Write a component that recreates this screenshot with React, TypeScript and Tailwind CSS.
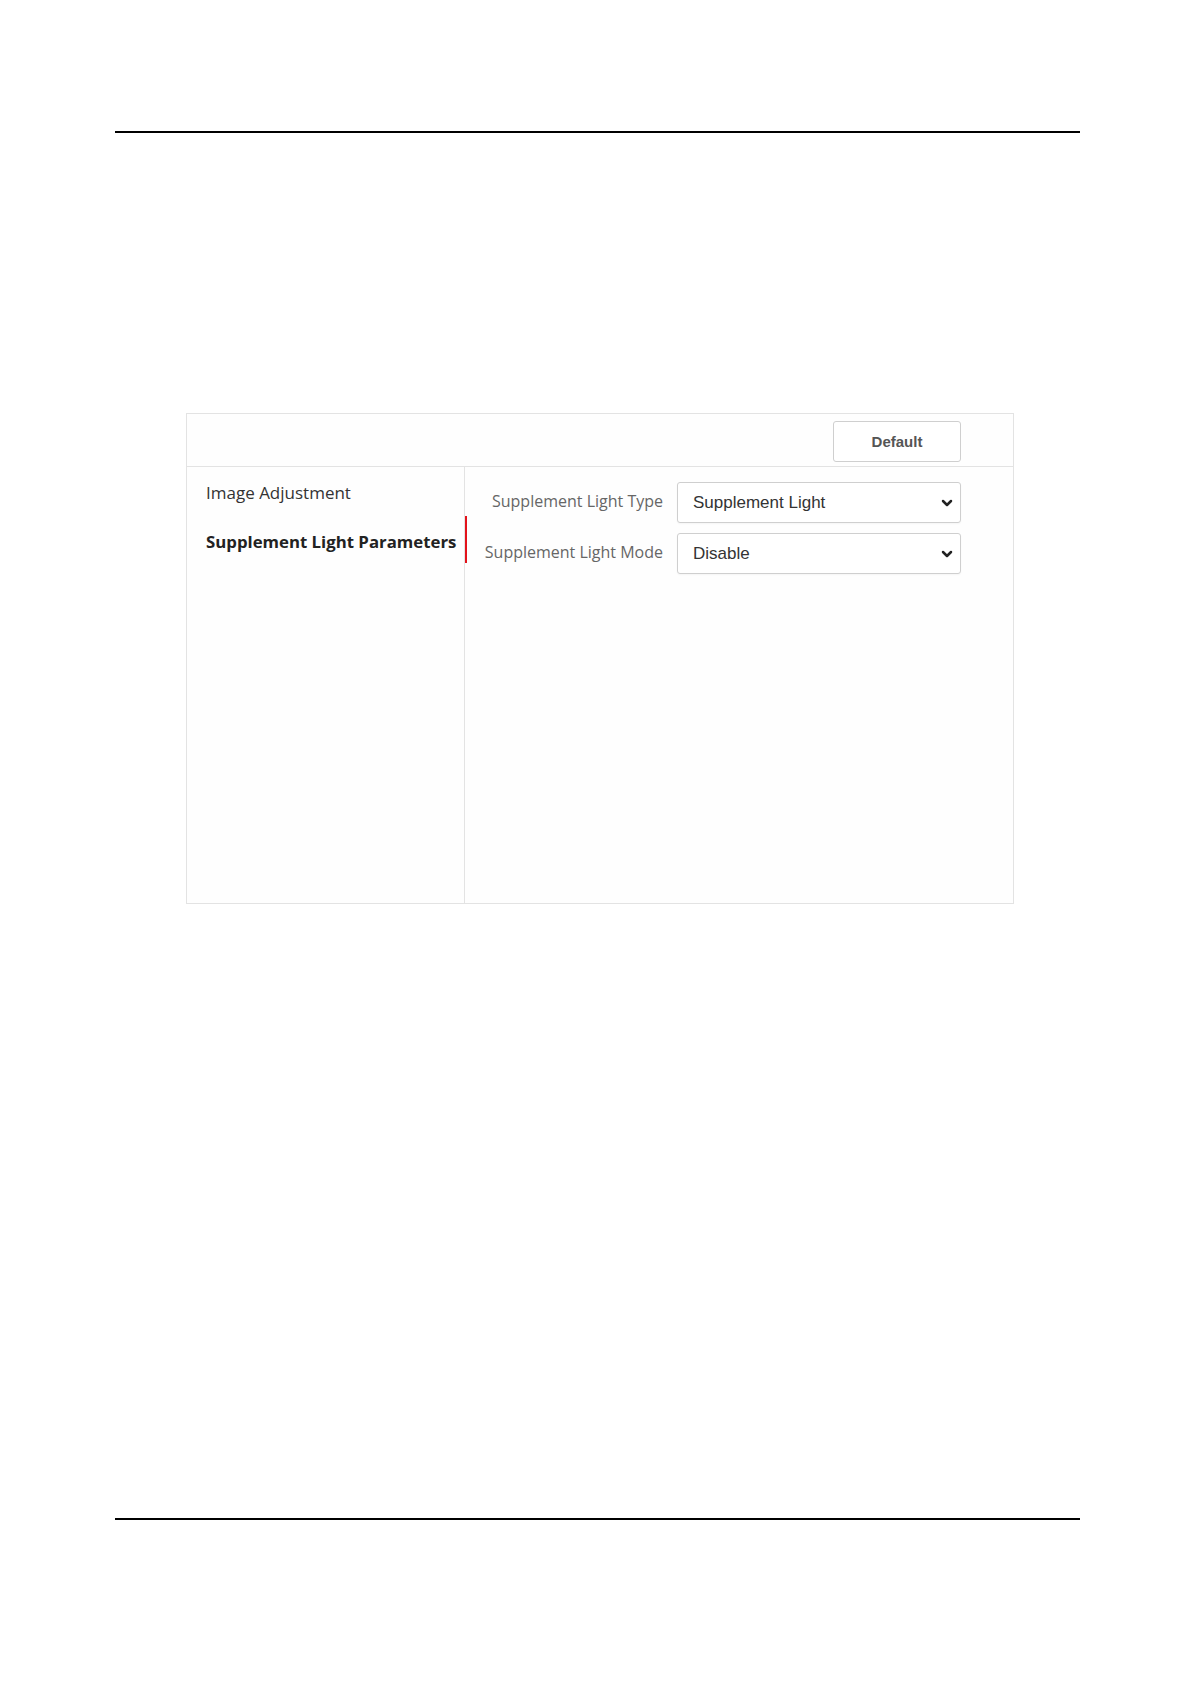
import { ChevronDown } from "lucide-react";

const ui = "font-['Open_Sans',sans-serif]";
const arial = "font-['Liberation_Sans',Arial,sans-serif]";

function Select({ value }: { value: string }) {
    return (
        <div className="flex h-[41px] w-[284px] items-center justify-between rounded-[3px] border border-[#cfcfcf] bg-white pl-[15px] pr-[5px] shadow-[0_1px_2px_rgba(0,0,0,0.04)]">
            <span className={`${arial} text-[17px] text-[#333]`}>{value}</span>
            <ChevronDown className="h-[16px] w-[16px] text-[#222]" strokeWidth={3.75} />
        </div>
    );
}

export default function App() {
    return (
        <div className="min-h-[1685px] w-[1181px] bg-white pt-[131px]">
            <div className="mx-[115px] h-[2px] w-[965px] bg-black" />

            <div className="ml-[186px] mt-[280px] flex h-[491px] w-[828px] flex-col border border-[#e3e3e3] bg-[#fefefe]">
                <div className="flex h-[53px] shrink-0 items-center justify-end border-b border-[#e3e3e3] pr-[52px] pt-[3px]">
                    <button className={`${arial} h-[41px] w-[128px] rounded-[3px] border border-[#cfcfcf] bg-white pt-[2px] text-[15px] font-bold text-[#555]`}>
                        Default
                    </button>
                </div>

                <div className="flex flex-1">
                    <div className={`${ui} w-[278px] shrink-0 border-r border-[#e3e3e3] pt-[2px]`}>
                        <div className="flex h-[47px] items-center pl-[19px] text-[17px] text-[#333]">Image Adjustment</div>
                        <div className="relative flex h-[47px] items-center pl-[19px] pt-[4px] text-[16.8px] font-bold text-[#222]">
                            Supplement Light Parameters
                            <span className="absolute -right-[3px] top-0 h-[47px] w-[2px] bg-[#e3131b]" />
                        </div>
                    </div>

                    <div className={`${ui} flex flex-col gap-[10px] pt-[15px]`}>
                        <div className="flex items-center">
                            <label className="w-[212px] pb-[3px] pr-[14px] text-right text-[16px] text-[#666]">Supplement Light Type</label>
                            <Select value="Supplement Light" />
                        </div>
                        <div className="flex items-center">
                            <label className="w-[212px] pb-[3px] pr-[14px] text-right text-[16px] text-[#666]">Supplement Light Mode</label>
                            <Select value="Disable" />
                        </div>
                    </div>
                </div>
            </div>

            <div className="mx-[115px] mt-[614px] h-[2px] w-[965px] bg-black" />
        </div>
    );
}
